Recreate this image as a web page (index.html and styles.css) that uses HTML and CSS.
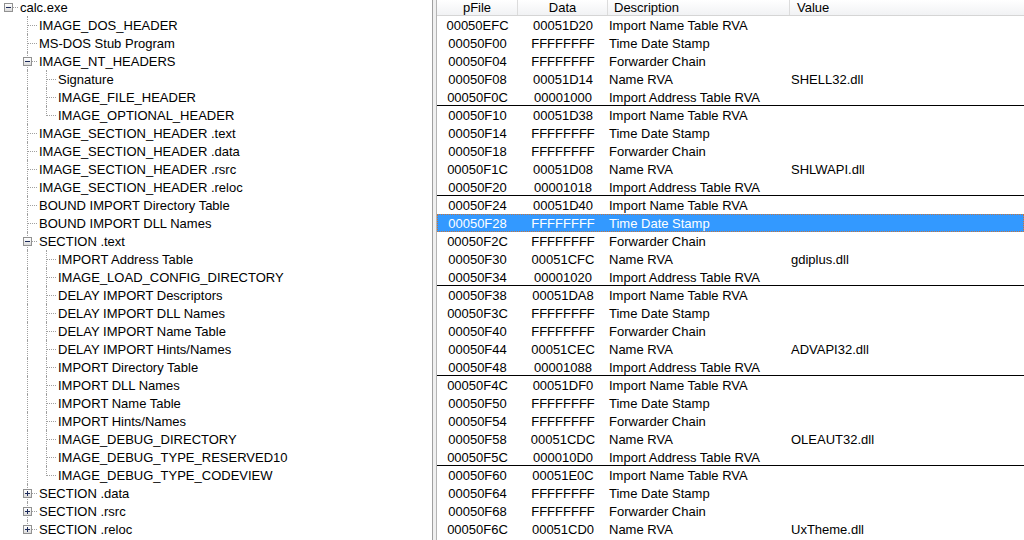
FILE: index.html
```html
<!DOCTYPE html>
<html>
<head>
<meta charset="utf-8">
<link rel="stylesheet" href="styles.css">
</head>
<body>
<div class="app">
  <div class="tree">
    <div class="tin">
      <div class="row"><span class="c root"><i class="box minus"></i></span><span class="lbl">calc.exe</span></div>
      <div class="row"><span class="c"></span><span class="c tee"></span><span class="lbl">IMAGE_DOS_HEADER</span></div>
      <div class="row"><span class="c"></span><span class="c tee"></span><span class="lbl">MS-DOS Stub Program</span></div>
      <div class="row"><span class="c"></span><span class="c tee"><i class="box minus"></i></span><span class="lbl">IMAGE_NT_HEADERS</span></div>
      <div class="row"><span class="c"></span><span class="c v"></span><span class="c tee"></span><span class="lbl">Signature</span></div>
      <div class="row"><span class="c"></span><span class="c v"></span><span class="c tee"></span><span class="lbl">IMAGE_FILE_HEADER</span></div>
      <div class="row"><span class="c"></span><span class="c v"></span><span class="c end"></span><span class="lbl">IMAGE_OPTIONAL_HEADER</span></div>
      <div class="row"><span class="c"></span><span class="c tee"></span><span class="lbl">IMAGE_SECTION_HEADER .text</span></div>
      <div class="row"><span class="c"></span><span class="c tee"></span><span class="lbl">IMAGE_SECTION_HEADER .data</span></div>
      <div class="row"><span class="c"></span><span class="c tee"></span><span class="lbl">IMAGE_SECTION_HEADER .rsrc</span></div>
      <div class="row"><span class="c"></span><span class="c tee"></span><span class="lbl">IMAGE_SECTION_HEADER .reloc</span></div>
      <div class="row"><span class="c"></span><span class="c tee"></span><span class="lbl">BOUND IMPORT Directory Table</span></div>
      <div class="row"><span class="c"></span><span class="c tee"></span><span class="lbl">BOUND IMPORT DLL Names</span></div>
      <div class="row"><span class="c"></span><span class="c tee"><i class="box minus"></i></span><span class="lbl">SECTION .text</span></div>
      <div class="row"><span class="c"></span><span class="c v"></span><span class="c tee"></span><span class="lbl">IMPORT Address Table</span></div>
      <div class="row"><span class="c"></span><span class="c v"></span><span class="c tee"></span><span class="lbl">IMAGE_LOAD_CONFIG_DIRECTORY</span></div>
      <div class="row"><span class="c"></span><span class="c v"></span><span class="c tee"></span><span class="lbl">DELAY IMPORT Descriptors</span></div>
      <div class="row"><span class="c"></span><span class="c v"></span><span class="c tee"></span><span class="lbl">DELAY IMPORT DLL Names</span></div>
      <div class="row"><span class="c"></span><span class="c v"></span><span class="c tee"></span><span class="lbl">DELAY IMPORT Name Table</span></div>
      <div class="row"><span class="c"></span><span class="c v"></span><span class="c tee"></span><span class="lbl">DELAY IMPORT Hints/Names</span></div>
      <div class="row"><span class="c"></span><span class="c v"></span><span class="c tee"></span><span class="lbl">IMPORT Directory Table</span></div>
      <div class="row"><span class="c"></span><span class="c v"></span><span class="c tee"></span><span class="lbl">IMPORT DLL Names</span></div>
      <div class="row"><span class="c"></span><span class="c v"></span><span class="c tee"></span><span class="lbl">IMPORT Name Table</span></div>
      <div class="row"><span class="c"></span><span class="c v"></span><span class="c tee"></span><span class="lbl">IMPORT Hints/Names</span></div>
      <div class="row"><span class="c"></span><span class="c v"></span><span class="c tee"></span><span class="lbl">IMAGE_DEBUG_DIRECTORY</span></div>
      <div class="row"><span class="c"></span><span class="c v"></span><span class="c tee"></span><span class="lbl">IMAGE_DEBUG_TYPE_RESERVED10</span></div>
      <div class="row"><span class="c"></span><span class="c v"></span><span class="c end"></span><span class="lbl">IMAGE_DEBUG_TYPE_CODEVIEW</span></div>
      <div class="row"><span class="c"></span><span class="c tee"><i class="box plus"></i></span><span class="lbl">SECTION .data</span></div>
      <div class="row"><span class="c"></span><span class="c tee"><i class="box plus"></i></span><span class="lbl">SECTION .rsrc</span></div>
      <div class="row"><span class="c"></span><span class="c end"><i class="box plus"></i></span><span class="lbl">SECTION .reloc</span></div>
    </div>
  </div>
  <div class="split"></div>
  <div class="list">
    <div class="hdr"><span class="h ctr">pFile</span><span class="h ctr">Data</span><span class="h">Description</span><span class="h hv">Value</span></div>
    <div class="lr"><span class="ctr">00050EFC</span><span class="ctr">00051D20</span><span class="tx">Import Name Table RVA</span><span class="tx"></span></div>
    <div class="lr"><span class="ctr">00050F00</span><span class="ctr">FFFFFFFF</span><span class="tx">Time Date Stamp</span><span class="tx"></span></div>
    <div class="lr"><span class="ctr">00050F04</span><span class="ctr">FFFFFFFF</span><span class="tx">Forwarder Chain</span><span class="tx"></span></div>
    <div class="lr"><span class="ctr">00050F08</span><span class="ctr">00051D14</span><span class="tx">Name RVA</span><span class="tx">SHELL32.dll</span></div>
    <div class="lr end"><span class="ctr">00050F0C</span><span class="ctr">00001000</span><span class="tx">Import Address Table RVA</span><span class="tx"></span></div>
    <div class="lr"><span class="ctr">00050F10</span><span class="ctr">00051D38</span><span class="tx">Import Name Table RVA</span><span class="tx"></span></div>
    <div class="lr"><span class="ctr">00050F14</span><span class="ctr">FFFFFFFF</span><span class="tx">Time Date Stamp</span><span class="tx"></span></div>
    <div class="lr"><span class="ctr">00050F18</span><span class="ctr">FFFFFFFF</span><span class="tx">Forwarder Chain</span><span class="tx"></span></div>
    <div class="lr"><span class="ctr">00050F1C</span><span class="ctr">00051D08</span><span class="tx">Name RVA</span><span class="tx">SHLWAPI.dll</span></div>
    <div class="lr end"><span class="ctr">00050F20</span><span class="ctr">00001018</span><span class="tx">Import Address Table RVA</span><span class="tx"></span></div>
    <div class="lr"><span class="ctr">00050F24</span><span class="ctr">00051D40</span><span class="tx">Import Name Table RVA</span><span class="tx"></span></div>
    <div class="lr sel"><span class="ctr">00050F28</span><span class="ctr">FFFFFFFF</span><span class="tx">Time Date Stamp</span><span class="tx"></span></div>
    <div class="lr"><span class="ctr">00050F2C</span><span class="ctr">FFFFFFFF</span><span class="tx">Forwarder Chain</span><span class="tx"></span></div>
    <div class="lr"><span class="ctr">00050F30</span><span class="ctr">00051CFC</span><span class="tx">Name RVA</span><span class="tx">gdiplus.dll</span></div>
    <div class="lr end"><span class="ctr">00050F34</span><span class="ctr">00001020</span><span class="tx">Import Address Table RVA</span><span class="tx"></span></div>
    <div class="lr"><span class="ctr">00050F38</span><span class="ctr">00051DA8</span><span class="tx">Import Name Table RVA</span><span class="tx"></span></div>
    <div class="lr"><span class="ctr">00050F3C</span><span class="ctr">FFFFFFFF</span><span class="tx">Time Date Stamp</span><span class="tx"></span></div>
    <div class="lr"><span class="ctr">00050F40</span><span class="ctr">FFFFFFFF</span><span class="tx">Forwarder Chain</span><span class="tx"></span></div>
    <div class="lr"><span class="ctr">00050F44</span><span class="ctr">00051CEC</span><span class="tx">Name RVA</span><span class="tx">ADVAPI32.dll</span></div>
    <div class="lr end"><span class="ctr">00050F48</span><span class="ctr">00001088</span><span class="tx">Import Address Table RVA</span><span class="tx"></span></div>
    <div class="lr"><span class="ctr">00050F4C</span><span class="ctr">00051DF0</span><span class="tx">Import Name Table RVA</span><span class="tx"></span></div>
    <div class="lr"><span class="ctr">00050F50</span><span class="ctr">FFFFFFFF</span><span class="tx">Time Date Stamp</span><span class="tx"></span></div>
    <div class="lr"><span class="ctr">00050F54</span><span class="ctr">FFFFFFFF</span><span class="tx">Forwarder Chain</span><span class="tx"></span></div>
    <div class="lr"><span class="ctr">00050F58</span><span class="ctr">00051CDC</span><span class="tx">Name RVA</span><span class="tx">OLEAUT32.dll</span></div>
    <div class="lr end"><span class="ctr">00050F5C</span><span class="ctr">000010D0</span><span class="tx">Import Address Table RVA</span><span class="tx"></span></div>
    <div class="lr"><span class="ctr">00050F60</span><span class="ctr">00051E0C</span><span class="tx">Import Name Table RVA</span><span class="tx"></span></div>
    <div class="lr"><span class="ctr">00050F64</span><span class="ctr">FFFFFFFF</span><span class="tx">Time Date Stamp</span><span class="tx"></span></div>
    <div class="lr"><span class="ctr">00050F68</span><span class="ctr">FFFFFFFF</span><span class="tx">Forwarder Chain</span><span class="tx"></span></div>
    <div class="lr"><span class="ctr">00050F6C</span><span class="ctr">00051CD0</span><span class="tx">Name RVA</span><span class="tx">UxTheme.dll</span></div>
  </div>
</div>
</body>
</html>
```
FILE: styles.css
```css
html, body {
  margin: 0;
  padding: 0;
  background: #fff;
}
body {
  width: 1024px;
  height: 540px;
  overflow: hidden;
  font-family: "Liberation Sans", Arial, sans-serif;
  font-size: 13px;
  color: #000;
}
.app {
  display: flex;
  width: 1024px;
  height: 540px;
}
.tree {
  width: 432px;
  flex: none;
  overflow: hidden;
  background: #fff;
}
.tin {
  margin-top: -2px;
}
.row {
  display: flex;
  height: 18px;
  line-height: 18px;
  white-space: nowrap;
}
.c {
  position: relative;
  width: 19px;
  height: 18px;
  flex: none;
}
.c.v::before,
.c.tee::before,
.c.end::before {
  content: "";
  position: absolute;
  left: 8px;
  top: 0;
  height: 18px;
  border-left: 1px dotted #a0a0a0;
}
.c.end::before {
  height: 10px;
}
.c.tee::after,
.c.end::after,
.c.root::after {
  content: "";
  position: absolute;
  left: 9px;
  right: 1px;
  top: 9px;
  border-top: 1px dotted #a0a0a0;
}
.box {
  position: absolute;
  z-index: 1;
  left: 4px;
  top: 5px;
  width: 9px;
  height: 9px;
  box-sizing: border-box;
  border: 1px solid #919191;
  background: linear-gradient(#ffffff, #dcdcdc);
}
.box::before {
  content: "";
  position: absolute;
  left: 1px;
  top: 3px;
  width: 5px;
  height: 1px;
  background: #1c2a5a;
}
.box.plus::after {
  content: "";
  position: absolute;
  left: 3px;
  top: 1px;
  width: 1px;
  height: 5px;
  background: #1c2a5a;
}
.lbl {
  padding-left: 1px;
  padding-top: 1px;
}
.split {
  width: 3px;
  flex: none;
  background: #f0f0f0;
  border-left: 1px solid #a0a0a0;
  border-right: 1px solid #b4b4b4;
}
.list {
  flex: 1;
  min-width: 0;
  overflow: hidden;
  background: #fff;
}
.hdr,
.lr {
  display: grid;
  grid-template-columns: 81px 90px 182px 1fr;
}
.hdr {
  height: 16px;
  box-sizing: border-box;
  border-bottom: 1px solid #d5d5d5;
  background: linear-gradient(#ffffff, #f1f2f4);
  line-height: 15px;
}
.h {
  border-right: 1px solid #dcdcdc;
  padding-left: 6px;
  white-space: nowrap;
  overflow: hidden;
}
.h.ctr {
  padding-left: 0;
  text-align: center;
}
.h.hv {
  padding-left: 7px;
  border-right: none;
}
.lr {
  height: 18px;
  box-sizing: border-box;
  grid-template-rows: 17px;
  line-height: 18px;
  white-space: nowrap;
}
.lr > span {
  padding-top: 1px;
}
.lr .ctr {
  text-align: center;
}
.lr .tx {
  padding-left: 1px;
}
.lr.end {
  border-bottom: 1px solid #000;
}
.lr.sel {
  background: #3399ff;
  color: #fff;
  outline: 1px dotted #c8743a;
  outline-offset: -1px;
}
```
